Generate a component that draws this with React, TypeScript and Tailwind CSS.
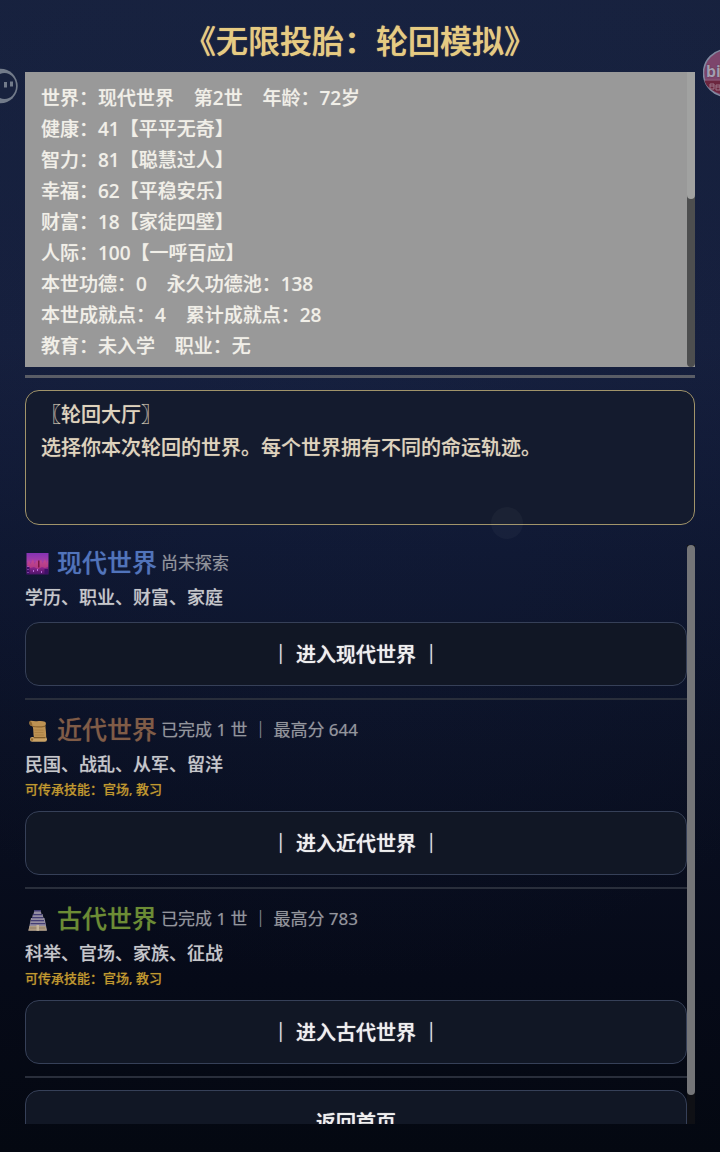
import type { ReactNode } from "react";

const gap = "\u00a0\u00a0\u00a0\u00a0";

const stats = [
  `世界：现代世界${gap}第2世${gap}年龄：72岁`,
  "健康：41【平平无奇】",
  "智力：81【聪慧过人】",
  "幸福：62【平稳安乐】",
  "财富：18【家徒四壁】",
  "人际：100【一呼百应】",
  `本世功德：0${gap}永久功德池：138`,
  `本世成就点：4${gap}累计成就点：28`,
  `教育：未入学${gap}职业：无`,
];

function CityIcon() {
  return (
    <svg viewBox="0 0 25 25" className="size-[25px] shrink-0" aria-hidden="true">
      <defs>
        <linearGradient id="dusk" x1="0" y1="0" x2="0" y2="1">
          <stop offset="0" stopColor="#8433b4" />
          <stop offset="0.4" stopColor="#a83fa6" />
          <stop offset="0.7" stopColor="#86238a" />
          <stop offset="1" stopColor="#4a1468" />
        </linearGradient>
      </defs>
      <rect x="1.500" y="2" width="22" height="21.500" fill="url(#dusk)" />
      <path
        d="M2 14l2-5 1.500 4L8 8l1.500 5L12 9l1.500 3L16 8.500l1.500 4L20 8l1.500 4L23 9v7l-3 1-3-1-4 2-4-2-4 1z"
        fill="#cf4a80"
        opacity="0.6"
      />
      <path d="M13 9.500h1.500v7H13z" fill="#7a1740" />
      <path d="M2 16h2.500v7H2zM19.500 18h3.500v5h-3.500z" fill="#3f1068" />
      <path
        d="M2.500 15h1v1h-1zM2.500 18h1v1h-1zM2.500 21h1v1h-1zM8 19h1v2H8zM12 18h1v2h-1zM16 20h1v2h-1z"
        fill="#b66fd6"
      />
    </svg>
  );
}

function ScrollIcon() {
  return (
    <svg viewBox="0 0 25 25" className="size-[25px] shrink-0" aria-hidden="true">
      <path
        d="M5 3c2-.6 4 .6 7 .2 3-.5 6-.4 8 .6 1.200.8 1.200 2.800.3 3.600.4 4 1 8 .9 12l-12 .8c-1.300-4-.4-8-1.500-12C4.500 8.500 3.500 4.500 5 3z"
        fill="#bd9253"
      />
      <path d="M7.500 7.700c4 1 9 .6 12.800-.3l.1 1.300c-4 1-9 1.200-12.700.4z" fill="#8a6430" />
      <path d="M5 3c1.800.6 2.500 3 2.300 5C4.800 8 3.800 4.500 5 3z" fill="#8a6430" />
      <path d="M9.500 12h9M9.500 14.500h9M10 17h9" stroke="#a87d41" strokeWidth="0.800" />
      <rect x="5" y="19" width="17" height="4.800" rx="2.200" fill="#caa265" />
      <path d="M8.500 19h12v1.300h-12z" fill="#805c2a" />
      <circle cx="7" cy="21.500" r="1.200" fill="#946b33" />
    </svg>
  );
}

function PalaceIcon() {
  return (
    <svg viewBox="0 0 25 25" className="size-[25px] shrink-0" aria-hidden="true">
      <path d="M9.500 3h6l1 4h1l1 4h1l1 5 1.500 7.500H3.500L5 16l1-5h1l1-4h.5z" fill="#938da2" />
      <path
        d="M9 3h7v1.500H9zM8 7h9v1.300H8zM7 10h11v1.300H7zM6 13h13v1.300H6zM5.500 16h14.500v1.200H5.500z"
        fill="#433e74"
      />
      <path d="M4.500 19h16l1.300 4.800h-18.500z" fill="#ad9a80" />
      <path d="M5 21h15" stroke="#85755f" strokeWidth="0.800" />
      <path d="M11.500 18h2.500v5.800h-2.500z" fill="#c4b59a" />
    </svg>
  );
}

type World = {
  name: string;
  color: string;
  icon: ReactNode;
  status: string;
  tags: string;
  skills?: string;
};

const worlds: World[] = [
  {
    name: "现代世界",
    color: "text-[#5174bb]",
    icon: <CityIcon />,
    status: "尚未探索",
    tags: "学历、职业、财富、家庭",
  },
  {
    name: "近代世界",
    color: "text-[#805c47]",
    icon: <ScrollIcon />,
    status: "已完成 1 世 ｜ 最高分 644",
    tags: "民国、战乱、从军、留洋",
    skills: "可传承技能：官场, 教习",
  },
  {
    name: "古代世界",
    color: "text-[#6c8c35]",
    icon: <PalaceIcon />,
    status: "已完成 1 世 ｜ 最高分 783",
    tags: "科举、官场、家族、征战",
    skills: "可传承技能：官场, 教习",
  },
];

function MenuButton({ children }: { children: ReactNode }) {
  return (
    <button
      type="button"
      className="h-16 w-full shrink-0 rounded-[14px] border border-[#364058] bg-[#111725] pt-[2px] text-[20px] font-medium text-[#efefef] [text-shadow:0_0_1px_currentColor]"
    >
      {children}
    </button>
  );
}

function WorldSection({ world }: { world: World }) {
  return (
    <section className="flex shrink-0 flex-col gap-3">
      <div className="flex flex-col gap-[3px]">
        <div className="flex h-9 items-center">
          {world.icon}
          <h2 className={`ml-[7px] pb-[2px] text-[25px] leading-[34px] font-medium ${world.color}`}>{world.name}</h2>
          <span className="ml-1 text-[17px] font-normal text-[#94969d]">{world.status}</span>
        </div>
        <p className="text-[18px] leading-[26px] text-[#c6c7cb]">{world.tags}</p>
        {world.skills && <p className="text-[13px] leading-[19px] text-[#c0982f]">{world.skills}</p>}
      </div>
      <MenuButton>｜ 进入{world.name} ｜</MenuButton>
      <hr className="h-[2px] border-0 bg-[#292e3b]" />
    </section>
  );
}

export default function App() {
  return (
    <div
      lang="zh-CN"
      className="relative flex h-screen flex-col overflow-hidden bg-[radial-gradient(ellipse_90%_60%_at_50%_25%,#19264a55,transparent),linear-gradient(180deg,#17213d_0%,#151e3b_30%,#0e162f_48%,#0a1023_65%,#060a18_85%,#040811_100%)] px-[25px] pb-7 font-['Noto_Sans','Noto_Sans_CJK_SC',sans-serif] font-medium [text-shadow:0_0_1px_color-mix(in_srgb,currentColor_50%,transparent)]"
    >
      <h1 className="shrink-0 pt-[18px] pb-2 text-center text-[32px] leading-[46px] font-medium text-[#e6cb82] [text-shadow:0_0_1px_currentColor]">
        《无限投胎：轮回模拟》
      </h1>

      <section className="flex h-[295px] shrink-0 bg-[#999999]">
        <ul className="flex-1 overflow-y-auto px-4 pt-[11px] text-[19px] leading-[31px] text-[#f1efe8] [scrollbar-width:none]">
          {stats.map((line) => (
            <li key={line}>{line}</li>
          ))}
        </ul>
        <div className="w-2 rounded-b bg-[#4d4e4f]">
          <div className="h-[127px] rounded-b bg-[#a1a2a1]" />
        </div>
      </section>

      <hr className="mt-2 h-[3px] shrink-0 border-0 bg-[#5a5d66]" />

      <section className="mt-3 h-[135px] shrink-0 rounded-[14px] border border-[#a1946a] bg-[#141b2e] px-[15px] pt-[7px] text-[20px] leading-[33px] text-[#dfd3bd]">
        <h2 className="font-medium">〖轮回大厅〗</h2>
        <p>选择你本次轮回的世界。每个世界拥有不同的命运轨迹。</p>
      </section>

      <main className="mt-5 flex min-h-0 flex-1">
        <div className="flex min-w-0 flex-1 flex-col gap-3 overflow-y-auto [scrollbar-width:none]">
          {worlds.map((world) => (
            <WorldSection key={world.name} world={world} />
          ))}
          <MenuButton>返回首页</MenuButton>
        </div>
        <div className="w-2 bg-[#0f1015]">
          <div className="h-[95%] rounded-full bg-[#747578]" />
        </div>
      </main>

      <svg viewBox="0 0 18 36" className="absolute top-[68px] left-0 h-9 w-[18px]" aria-hidden="true">
        <circle cx="0.500" cy="18" r="17.200" fill="#727b8a" />
        <ellipse cx="4.500" cy="18" rx="11.500" ry="13" fill="#18223e" />
        <path d="M5.500 14v5.500M11.500 13.500v5" stroke="#727b8a" strokeWidth="3" />
      </svg>

      <svg viewBox="0 0 17 50" className="absolute top-[48px] right-0 h-[50px] w-[17px]" aria-hidden="true">
        <circle cx="24" cy="25" r="23.500" fill="#7d466c" stroke="#8189a0" strokeWidth="1.500" />
        <path d="M1.500 32.500H17v13C9 43 3 39 1.500 32.500z" fill="#6c263f" />
        <text x="3" y="29" fontSize="16" fontWeight="700" fill="#a39db0">
          bi
        </text>
        <path d="M7 36h4v5H7zM13 37h4v5h-4zM7 38h4M13 39h4" fill="none" stroke="#9a7488" strokeWidth="1" />
        <path d="M2 32h15" stroke="#8f6079" strokeWidth="0.800" />
      </svg>

      <div className="pointer-events-none absolute top-[507px] left-[491px] size-8 rounded-full bg-white/3" />
    </div>
  );
}
